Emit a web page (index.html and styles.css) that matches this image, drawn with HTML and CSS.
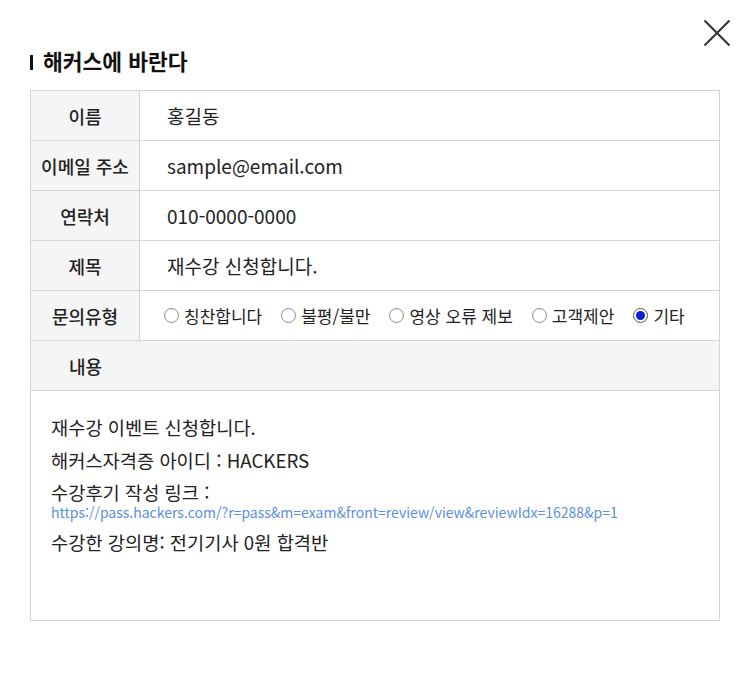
FILE: index.html
```html
<!DOCTYPE html>
<html lang="ko">
<head>
<meta charset="utf-8">
<link rel="stylesheet" href="styles.css">
</head>
<body>
<div class="popup">
  <button class="close" aria-label="닫기">
    <svg width="28" height="28" viewBox="0 0 28 28"><path d="M1.5 1.5 L26.5 26.5 M26.5 1.5 L1.5 26.5" stroke="#333" stroke-width="2" fill="none"/></svg>
  </button>
  <h2 class="title">해커스에 바란다</h2>
  <div class="form">
    <div class="row">
      <div class="label">이름</div>
      <div class="value">홍길동</div>
    </div>
    <div class="row">
      <div class="label">이메일 주소</div>
      <div class="value">sample@email.com</div>
    </div>
    <div class="row">
      <div class="label">연락처</div>
      <div class="value">010-0000-0000</div>
    </div>
    <div class="row">
      <div class="label">제목</div>
      <div class="value">재수강 신청합니다.</div>
    </div>
    <div class="row">
      <div class="label">문의유형</div>
      <div class="value radios">
        <span class="opt"><span class="radio"></span>칭찬합니다</span>
        <span class="opt"><span class="radio"></span>불평/불만</span>
        <span class="opt"><span class="radio"></span>영상 오류 제보</span>
        <span class="opt"><span class="radio"></span>고객제안</span>
        <span class="opt"><span class="radio checked"></span>기타</span>
      </div>
    </div>
    <div class="row full">
      <div class="label">내용</div>
    </div>
    <div class="content">
      <p class="line">재수강 이벤트 신청합니다.</p>
      <p class="line">해커스자격증 아이디 : HACKERS</p>
      <p class="line tight">수강후기 작성 링크 :</p>
      <a class="link" href="#">https://pass.hackers.com/?r=pass&amp;m=exam&amp;front=review/view&amp;reviewIdx=16288&amp;p=1</a>
      <p class="line">수강한 강의명: 전기기사 0원 합격반</p>
    </div>
  </div>
</div>
</body>
</html>
```

FILE: styles.css
```css
* { box-sizing: border-box; }
html, body { margin: 0; padding: 0; background: #fff; }
body {
  font-family: "Noto Sans CJK KR", "Noto Sans", sans-serif;
  color: #222;
  width: 750px;
  height: 680px;
}
.popup {
  position: relative;
  padding: 46px 31px 0 30px;
}
.close {
  position: absolute;
  top: 19px;
  left: 703px;
  width: 28px;
  height: 28px;
  padding: 0;
  border: 0;
  background: none;
}
.close svg { display: block; }
.title {
  margin: 0 0 14px 0;
  font-size: 21.5px;
  font-weight: 700;
  line-height: 30px;
  color: #111;
  padding-left: 13px;
  position: relative;
}
.title::before {
  content: "";
  position: absolute;
  left: 0;
  top: 9px;
  width: 3px;
  height: 15px;
  background: #111;
}
.form {
  border: 1px solid #d4d4d4;
  width: 690px;
}
.row {
  display: grid;
  grid-template-columns: 109px 1fr;
  height: 50px;
  border-bottom: 1px solid #d4d4d4;
}
.label {
  background: #f5f5f5;
  border-right: 1px solid #d4d4d4;
  display: flex;
  align-items: center;
  justify-content: center;
  font-size: 18px;
  font-weight: 500;
  color: #222;
}
.row.full {
  background: #f5f5f5;
}
.row.full .label { border-right: 0; }
.value {
  display: flex;
  align-items: center;
  padding-left: 27px;
  font-size: 19px;
  color: #222;
}
.radios {
  padding-left: 24px;
  font-size: 17px;
  gap: 19px;
}
.opt {
  display: inline-flex;
  align-items: center;
  gap: 5px;
}
.radio {
  display: inline-block;
  width: 15px;
  height: 15px;
  border: 1px solid #8a8a8a;
  border-radius: 50%;
  background: #fff;
  position: relative;
}
.radio.checked {
  border-color: #555;
}
.radio.checked::after {
  content: "";
  position: absolute;
  left: 2px;
  top: 2px;
  width: 9px;
  height: 9px;
  border-radius: 50%;
  background: #0a20d8;
}
.content {
  height: 229px;
  padding: 19px 20px 0 20px;
}
.line {
  margin: 0;
  font-size: 18.7px;
  line-height: 33px;
  color: #222;
}
.line.tight {
  line-height: 22px;
  padding-top: 5px;
}
.link {
  display: block;
  margin: 0 0 4px 0;
  font-size: 14px;
  line-height: 18px;
  color: #5b8fe0;
  text-decoration: none;
}
```
